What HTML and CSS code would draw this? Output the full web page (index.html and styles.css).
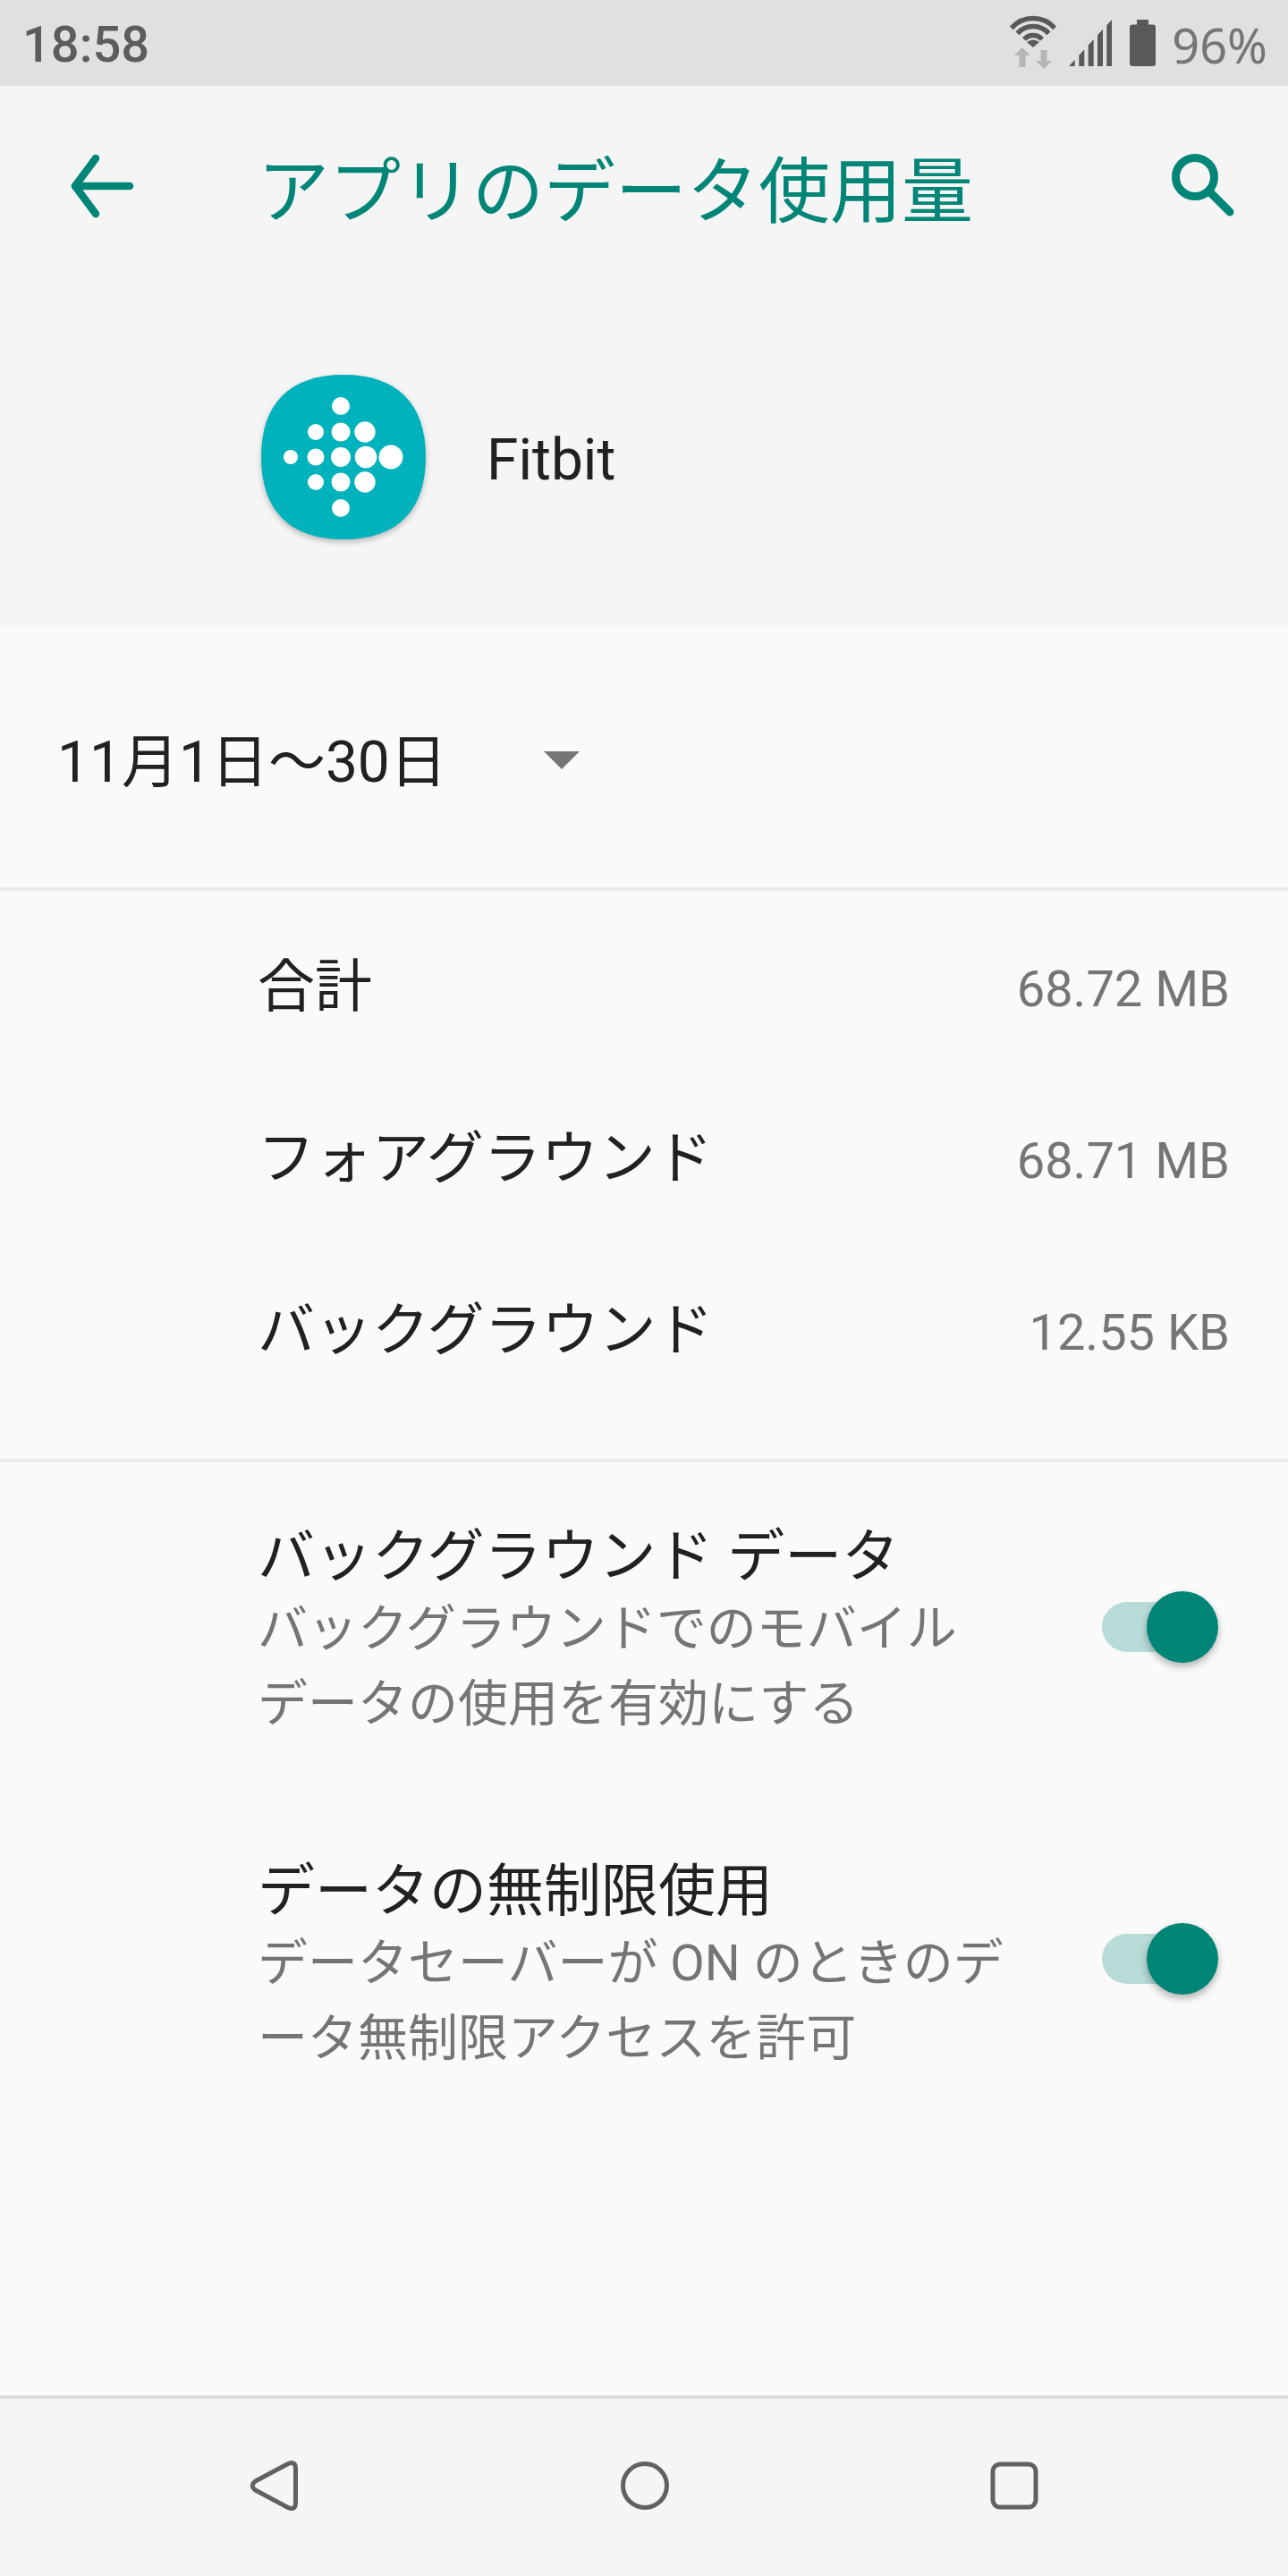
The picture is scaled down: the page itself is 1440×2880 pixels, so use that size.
FILE: index.html
```html
<!DOCTYPE html>
<html lang="ja">
<head>
    <meta charset="UTF-8">
    <meta name="viewport" content="width=device-width, initial-scale=1.0">
    <title>アプリのデータ使用量</title>
    <link rel="stylesheet" href="styles.css">
</head>
<body>
    <div class="phone">
        <div class="status-bar">
            <span class="clock">18:58</span>
            <svg class="icon-wifi" width="56" height="68" viewBox="0 0 56 68" fill="none">
                <g stroke="#595959" stroke-width="5.5">
                    <path d="M3.9 17.3A32.5 32.5 0 0 1 52.1 17.3"/>
                    <path d="M10.5 23.3A23.5 23.5 0 0 1 45.5 23.3"/>
                    <path d="M18 30A13.5 13.5 0 0 1 38 30"/>
                </g>
                <path d="M28 39L21 33Q28 28 35 33Z" fill="#595959"/>
                <path d="M16 39L25 48H19.5V61H12.5V48H7Z" fill="#b5b5b5"/>
                <path d="M36.5 42H43.5V54H49L40 63L31 54H36.5Z" fill="#b5b5b5"/>
            </svg>
            <svg class="icon-signal" width="48" height="52" viewBox="0 0 48 52" fill="#595959">
                <path d="M0 52L6.7 44.7V52Z"/>
                <path d="M11.3 39.8L17.3 33.3V52H11.3Z"/>
                <path d="M21.7 28.5L27.7 22V52H21.7Z"/>
                <path d="M32 17.3L38 10.8V52H32Z"/>
                <path d="M42.3 6.2L48 0V52H42.3Z"/>
            </svg>
            <svg class="icon-battery" width="29" height="52" viewBox="0 0 29 52" fill="#595959">
                <rect x="8" y="0" width="13" height="7"/>
                <rect x="0" y="5.5" width="29" height="46.5" rx="3"/>
            </svg>
            <span class="battery-pct">96%</span>
        </div>

        <div class="app-header">
            <div class="toolbar">
                <svg class="back-icon" width="96" height="96" viewBox="0 0 96 96" fill="none" stroke="#008577" stroke-width="8.5" stroke-linecap="round" stroke-linejoin="round">
                    <path d="M81 48H20"/>
                    <path d="M43 17L20 48L43 79"/>
                </svg>
                <h1 class="toolbar-title">アプリのデータ使用量</h1>
                <svg class="search-icon" width="96" height="96" viewBox="0 0 96 96" fill="none" stroke="#008577" stroke-width="9" stroke-linecap="round">
                    <circle cx="38" cy="38" r="21.5"/>
                    <path d="M54 54L77 77"/>
                </svg>
            </div>
            <div class="app-info">
                <svg class="app-icon" width="184" height="184" viewBox="0 0 184 184">
                    <path d="M92 0C152 0 184 32 184 92C184 152 152 184 92 184C32 184 0 152 0 92C0 32 32 0 92 0Z" fill="#00b2bb"/>
                    <g fill="#fff">
                        <circle cx="89" cy="35" r="10"/>
                        <circle cx="61" cy="64" r="9"/>
                        <circle cx="89" cy="64" r="10.5"/>
                        <circle cx="116" cy="64" r="11.7"/>
                        <circle cx="33" cy="92" r="8"/>
                        <circle cx="61" cy="92" r="9.5"/>
                        <circle cx="89" cy="92" r="11"/>
                        <circle cx="117" cy="92" r="12.3"/>
                        <circle cx="145" cy="92" r="13.5"/>
                        <circle cx="61" cy="120" r="9"/>
                        <circle cx="89" cy="120" r="10.5"/>
                        <circle cx="116" cy="120" r="11.7"/>
                        <circle cx="89" cy="149" r="10"/>
                    </g>
                </svg>
                <span class="app-name">Fitbit</span>
            </div>
        </div>

        <div class="content">
            <div class="cycle-spinner">
                <span class="cycle-label">11月1日～30日</span>
                <span class="spinner-arrow"></span>
            </div>

            <div class="summary">
                <div class="summary-row">
                    <span class="row-title">合計</span>
                    <span class="row-value">68.72 MB</span>
                </div>
                <div class="summary-row">
                    <span class="row-title">フォアグラウンド</span>
                    <span class="row-value">68.71 MB</span>
                </div>
                <div class="summary-row">
                    <span class="row-title">バックグラウンド</span>
                    <span class="row-value">12.55 KB</span>
                </div>
            </div>

            <div class="settings">
                <div class="setting-row">
                    <div class="setting-text">
                        <div class="row-title">バックグラウンド データ</div>
                        <div class="setting-sub">バックグラウンドでのモバイル<br>データの使用を有効にする</div>
                    </div>
                    <div class="switch"><span class="switch-knob"></span></div>
                </div>
                <div class="setting-row">
                    <div class="setting-text">
                        <div class="row-title">データの無制限使用</div>
                        <div class="setting-sub">データセーバーが ON のときのデ<br>ータ無制限アクセスを許可</div>
                    </div>
                    <div class="switch"><span class="switch-knob"></span></div>
                </div>
            </div>
        </div>

        <div class="nav-bar">
            <svg width="96" height="96" viewBox="0 0 96 96" fill="none" stroke="#616161" stroke-width="5" stroke-linejoin="round">
                <path d="M25.500 43L62 23.500Q70.500 20 70.500 29V67Q70.500 76 62 72.500L25.500 53Q19 48 25.500 43Z"/>
            </svg>
            <svg width="96" height="96" viewBox="0 0 96 96" fill="none" stroke="#616161" stroke-width="5">
                <circle cx="48" cy="48" r="24.500"/>
            </svg>
            <svg width="96" height="96" viewBox="0 0 96 96" fill="none" stroke="#616161" stroke-width="5">
                <rect x="24" y="24" width="48" height="48" rx="8"/>
            </svg>
        </div>
    </div>
</body>
</html>
```

FILE: styles.css
```css
/* page */
body {
    margin: 0;
    padding: 0;
    background-color: #fafafa;
    font-family: Roboto, "Noto Sans CJK JP", sans-serif;
    color: #212121;
}

.phone {
    width: 1440px;
    height: 2880px;
    display: flex;
    flex-direction: column;
    overflow: hidden;
}

/* status bar */
.status-bar {
    height: 96px;
    flex: none;
    display: flex;
    align-items: center;
    padding: 0 23px 0 25px;
    background-color: #e0e0e0;
}
.clock {
    padding-top: 4px;
    font-size: 56px;
    font-weight: 500;
    color: #5c5c5c;
    margin-right: auto;
}
.icon-signal {
    margin-left: 12px;
}
.icon-battery {
    margin-left: 20px;
}
.battery-pct {
    margin-left: 18px;
    padding-top: 3px;
    font-family: "Noto Sans", sans-serif;
    font-size: 54px;
    color: #757575;
}

/* toolbar + app icon */
.app-header {
    height: 606px;
    flex: none;
    background-color: #f5f5f5;
}
.toolbar {
    height: 224px;
    display: flex;
    align-items: center;
    padding: 0 46px 0 64px;
}
.toolbar-title {
    margin: 0 0 2px 128px;
    font-size: 80px;
    font-weight: 400;
    color: #008577;
}
.search-icon {
    margin-left: auto;
}
.app-info {
    height: 382px;
    display: flex;
    align-items: center;
    padding-left: 292px;
}
.app-icon {
    filter: drop-shadow(0 3px 3px rgba(0, 0, 0, 0.25));
}
.app-name {
    margin-left: 68px;
    padding-top: 6px;
    font-size: 64px;
}

/* main list */
.content {
    flex: 1;
    display: flex;
    flex-direction: column;
}
.cycle-spinner {
    height: 290px;
    flex: none;
    display: flex;
    align-items: center;
    padding-left: 64px;
    border-bottom: 4px solid #ececec;
}
.cycle-label {
    margin-bottom: 3px;
    font-size: 64px;
}
.spinner-arrow {
    margin: 6px 0 0 108px;
    border-top: 20px solid #757575;
    border-left: 20px solid transparent;
    border-right: 20px solid transparent;
}

.summary {
    padding: 12px 65px 47px 288px;
    border-bottom: 4px solid #ececec;
}
.summary-row {
    height: 192px;
    display: flex;
    align-items: center;
    justify-content: space-between;
}
.row-title {
    font-size: 64px;
    line-height: 76px;
}
.row-value {
    padding-top: 3px;
    font-size: 56px;
    color: #757575;
}

/* switches */
.settings {
    padding: 68px 72px 0 288px;
    display: flex;
    flex-direction: column;
    gap: 130px;
}
.setting-row {
    display: flex;
    align-items: center;
    justify-content: space-between;
}
.setting-sub {
    font-size: 56px;
    line-height: 84px;
    color: #757575;
    white-space: nowrap;
}
.switch {
    position: relative;
    width: 120px;
    height: 56px;
    margin: 0 16px 13px 0;
    border-radius: 28px;
    background-color: #b7dbd7;
}
.setting-row + .setting-row .switch {
    margin-bottom: 18px;
}
.switch-knob {
    position: absolute;
    top: -12px;
    right: -10px;
    width: 80px;
    height: 80px;
    border-radius: 50%;
    background-color: #008577;
    box-shadow: 0 4px 8px rgba(0, 0, 0, 0.3);
}

/* nav bar */
.nav-bar {
    height: 202px;
    flex: none;
    box-sizing: border-box;
    display: flex;
    align-items: center;
    justify-content: space-between;
    padding: 0 258px 4px 260px;
    border-top: 4px solid #dcdcdc;
    background-color: #f5f5f5;
}
```
